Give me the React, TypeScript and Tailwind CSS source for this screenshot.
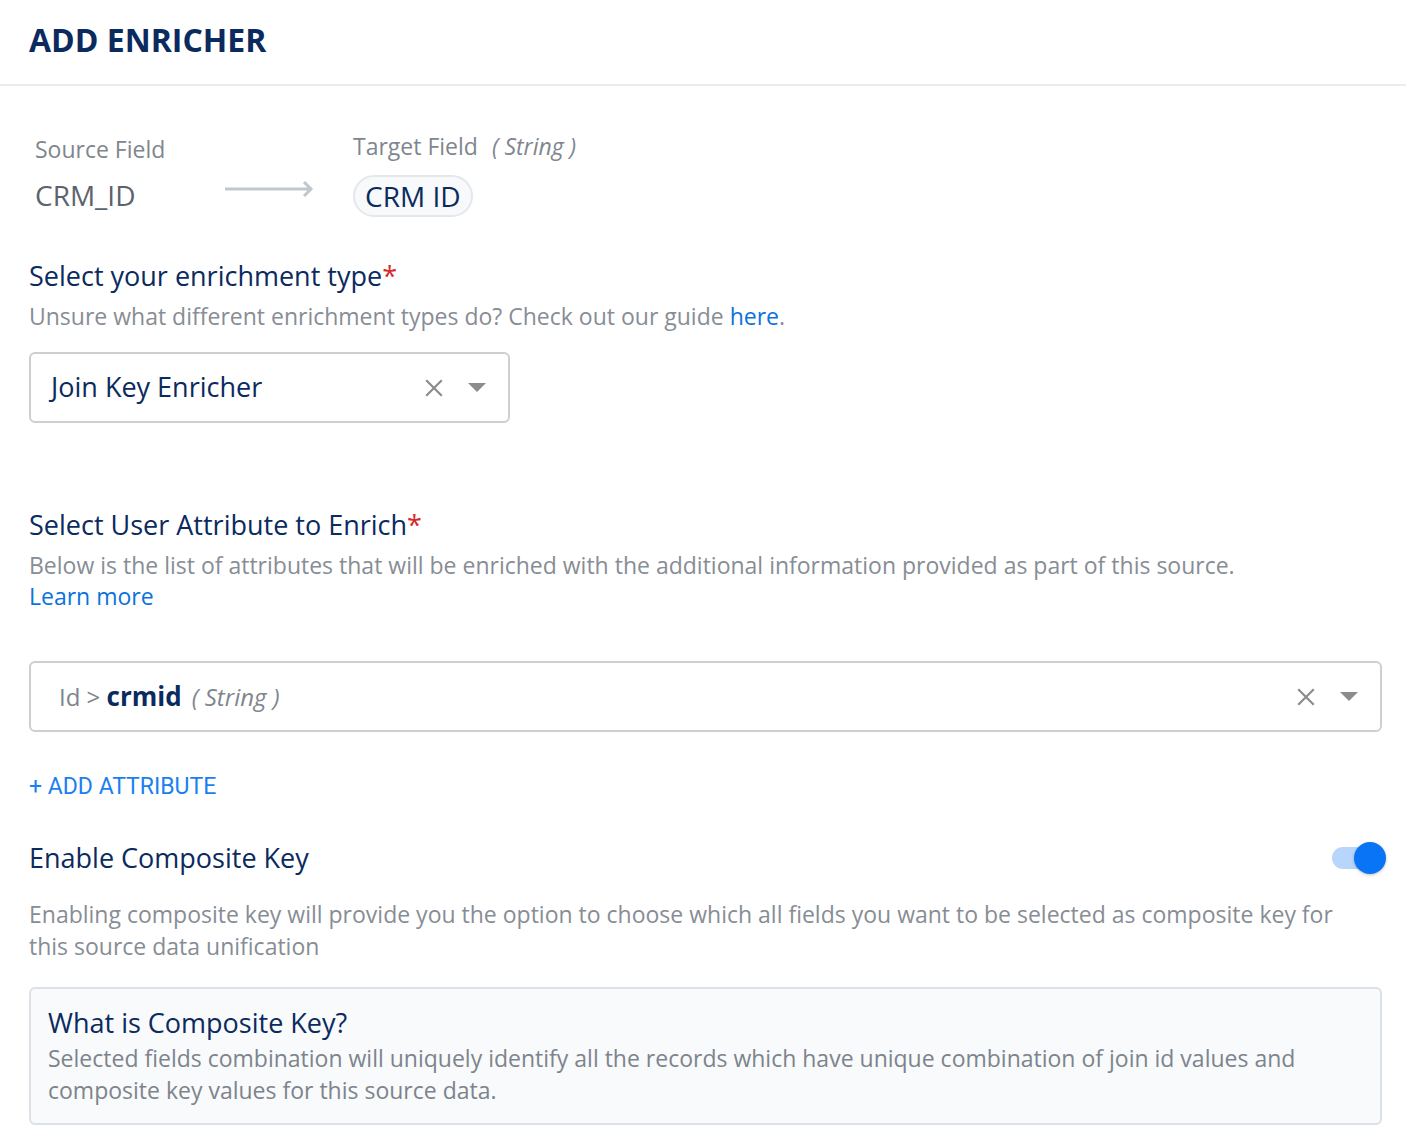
import React from 'react';

const font = { fontFamily: '"Open Sans", "Noto Sans", sans-serif' };

const Caret = () => (
  <svg width="18" height="10" viewBox="0 0 18 10">
    <path d="M0 0 L18 0 L9 9 Z" fill="#8c8c8c" />
  </svg>
);

const Cross = () => (
  <svg width="18" height="18" viewBox="0 0 18 18">
    <path d="M2 2 L16 16 M16 2 L2 16" stroke="#8c8c8c" strokeWidth="2.2" strokeLinecap="square" />
  </svg>
);

const SelectBox = ({ children, width }: { children: React.ReactNode; width: string }) => (
  <div className={`flex h-[71px] items-center rounded-[6px] border-2 border-[#cfcfcf] bg-white pr-[22px] ${width}`}>
    <div className="flex-1">{children}</div>
    <Cross />
    <div className="ml-[25px]">
      <Caret />
    </div>
  </div>
);

export default function App() {
  return (
    <div className="min-h-screen w-[1406px] bg-white" style={font}>
      <div className="h-[86px] border-b-2 border-[#ececec] pl-[29px] pt-[20px]">
        <h1 className="text-[32px] font-bold leading-[40px] text-[#0b2a5e]">ADD ENRICHER</h1>
      </div>

      <div className="pl-[29px] pr-[25px]">
        {/* source -> target */}
        <div className="mt-[45px] flex items-start">
          <div className="ml-[6px] w-[190px]">
            <div className="mt-[3px] text-[23px] leading-[30px] text-[#80868e]">Source Field</div>
            <div className="mt-[14px] text-[28px] leading-[34px] text-[#5c636c]">CRM_ID</div>
          </div>
          <div className="mt-[50px] w-[128px]">
            <svg width="90" height="16" viewBox="0 0 90 16">
              <path d="M0 8 L86 8 M79 1 L86 8 L79 15" stroke="#c2c7cd" strokeWidth="3" fill="none" />
            </svg>
          </div>
          <div>
            <div className="text-[23px] leading-[30px] text-[#80868e]">
              Target Field <span className="ml-[8px] italic">( String )</span>
            </div>
            <div className="mt-[14px] inline-flex h-[42px] items-center rounded-full border-2 border-[#e4e8ec] bg-[#f7f9fb] px-[10px] text-[28px] text-[#0b2a5e]">
              CRM ID
            </div>
          </div>
        </div>

        {/* enrichment type */}
        <div className="mt-[42px] text-[27px] leading-[34px] text-[#0b2a5e]">
          Select your enrichment type<span className="text-[#d42a2a]">*</span>
        </div>
        <div className="mt-[8px] text-[23px] leading-[30px] text-[#878d95]">
          Unsure what different enrichment types do? Check out our guide <span className="text-[#0a72dc]">here</span>.
        </div>
        <div className="mt-[21px]">
          <SelectBox width="w-[481px]">
            <span className="pl-[20px] text-[27px] text-[#0b2a5e]">Join Key Enricher</span>
          </SelectBox>
        </div>

        {/* user attribute */}
        <div className="mt-[85px] text-[27px] leading-[34px] text-[#0b2a5e]">
          Select User Attribute to Enrich<span className="text-[#d42a2a]">*</span>
        </div>
        <div className="mt-[8px] text-[23px] leading-[31px] text-[#878d95]">
          Below is the list of attributes that will be enriched with the additional information provided as part of this source.
          <br />
          <span className="text-[#0a72dc]">Learn more</span>
        </div>
        <div className="mt-[49px]">
          <SelectBox width="w-[1353px]">
            <span className="pl-[28px] text-[24px] text-[#0b2a5e]">
              <span className="text-[#7d848c]">Id &gt; </span>
              <span className="text-[26px] font-bold">crmid</span>
              <span className="ml-[10px] italic text-[#80868e]">( String )</span>
            </span>
          </SelectBox>
        </div>

        <div className="mt-[40px] text-[23px] leading-[30px] text-[#1a7ff0]" style={{ fontFamily: 'Roboto, sans-serif' }}>
          + ADD ATTRIBUTE
        </div>

        {/* composite key */}
        <div className="mt-[39px] flex items-center justify-between">
          <div className="text-[27px] leading-[34px] text-[#0b2a5e]">Enable Composite Key</div>
          <div className="relative mr-[-5px] h-[32px] w-[54px]">
            <div className="absolute left-0 top-[5px] h-[22px] w-[46px] rounded-full bg-[#b8d6fb]" />
            <div className="absolute right-0 top-0 h-[32px] w-[32px] rounded-full bg-[#0a74f7] shadow-[0_1px_3px_rgba(0,0,0,0.25)]" />
          </div>
        </div>
        <div className="mt-[23px] max-w-[1335px] text-[23px] leading-[32px] text-[#878d95]">
          Enabling composite key will provide you the option to choose which all fields you want to be selected as composite key for this source data unification
        </div>

        <div className="mt-[25px] w-[1353px] rounded-[6px] border-2 border-[#dde1e6] bg-[#f8fafc] px-[17px] pb-[17px] pt-[17px]">
          <div className="text-[27px] leading-[34px] text-[#0b2a5e]">What is Composite Key?</div>
          <div className="mt-[2px] text-[23px] leading-[32px] text-[#7d848c]">
            Selected fields combination will uniquely identify all the records which have unique combination of join id values and
            <br />
            composite key values for this source data.
          </div>
        </div>
      </div>
    </div>
  );
}
